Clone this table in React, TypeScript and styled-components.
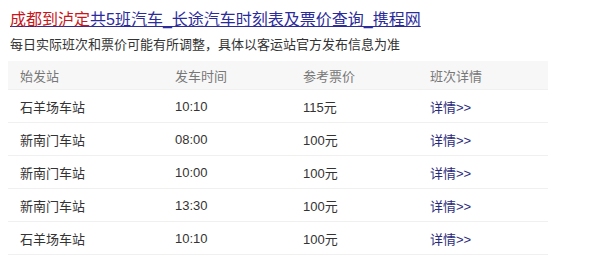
import styled, { createGlobalStyle } from "styled-components";

const GlobalStyle = createGlobalStyle`
  body {
    margin: 0;
    background: #fff;
    font-family: "Liberation Sans", "Noto Sans CJK SC", sans-serif;
  }
`;

const rows = [
  { station: "石羊场车站", time: "10:10", price: "115元" },
  { station: "新南门车站", time: "08:00", price: "100元" },
  { station: "新南门车站", time: "10:00", price: "100元" },
  { station: "新南门车站", time: "13:30", price: "100元" },
  { station: "石羊场车站", time: "10:10", price: "100元" },
];

const columns = [155, 128, 127, 130];

function App() {
  return (
    <Page>
      <GlobalStyle />
      <Title href="#">
        <Highlight>成都到泸定</Highlight>共5班汽车_长途汽车时刻表及票价查询_携程网
      </Title>
      <Note>每日实际班次和票价可能有所调整，具体以客运站官方发布信息为准</Note>
      <Table>
        <HeaderRow>
          <Cell>始发站</Cell>
          <Cell>发车时间</Cell>
          <Cell>参考票价</Cell>
          <Cell>班次详情</Cell>
        </HeaderRow>
        {rows.map((row, i) => (
          <Row key={i}>
            <Cell>{row.station}</Cell>
            <Cell>{row.time}</Cell>
            <Cell>{row.price}</Cell>
            <Cell>
              <Detail href="#">详情&gt;&gt;</Detail>
            </Cell>
          </Row>
        ))}
      </Table>
    </Page>
  );
}

const Page = styled.div`
  padding: 8px 0 0 8px;
  display: flex;
  flex-direction: column;
  align-items: flex-start;
`;

const Title = styled.a`
  margin-left: 2px;
  font-size: 16px;
  line-height: 24px;
  color: #2b2b9c;
  text-decoration: underline;
`;

const Highlight = styled.span`
  color: #c8161d;
`;

const Note = styled.div`
  margin: 2px 0 0 2px;
  font-size: 13px;
  line-height: 22px;
  color: #333;
`;

const Table = styled.div`
  margin-top: 5px;
  width: 540px;
  display: flex;
  flex-direction: column;
`;

const Row = styled.div`
  display: grid;
  grid-template-columns: ${columns.map((c) => `${c}px`).join(" ")};
  height: 32px;
  align-items: center;
  border-bottom: 1px solid #f0f0f0;
  font-size: 13px;
  color: #333;
`;

const HeaderRow = styled(Row)`
  height: 28px;
  background: #f7f7f7;
  color: #777;
`;

const Cell = styled.div`
  padding-left: 12px;
  white-space: nowrap;
`;

const Detail = styled.a`
  color: #2a2a7a;
  text-decoration: none;
`;

export default App;
